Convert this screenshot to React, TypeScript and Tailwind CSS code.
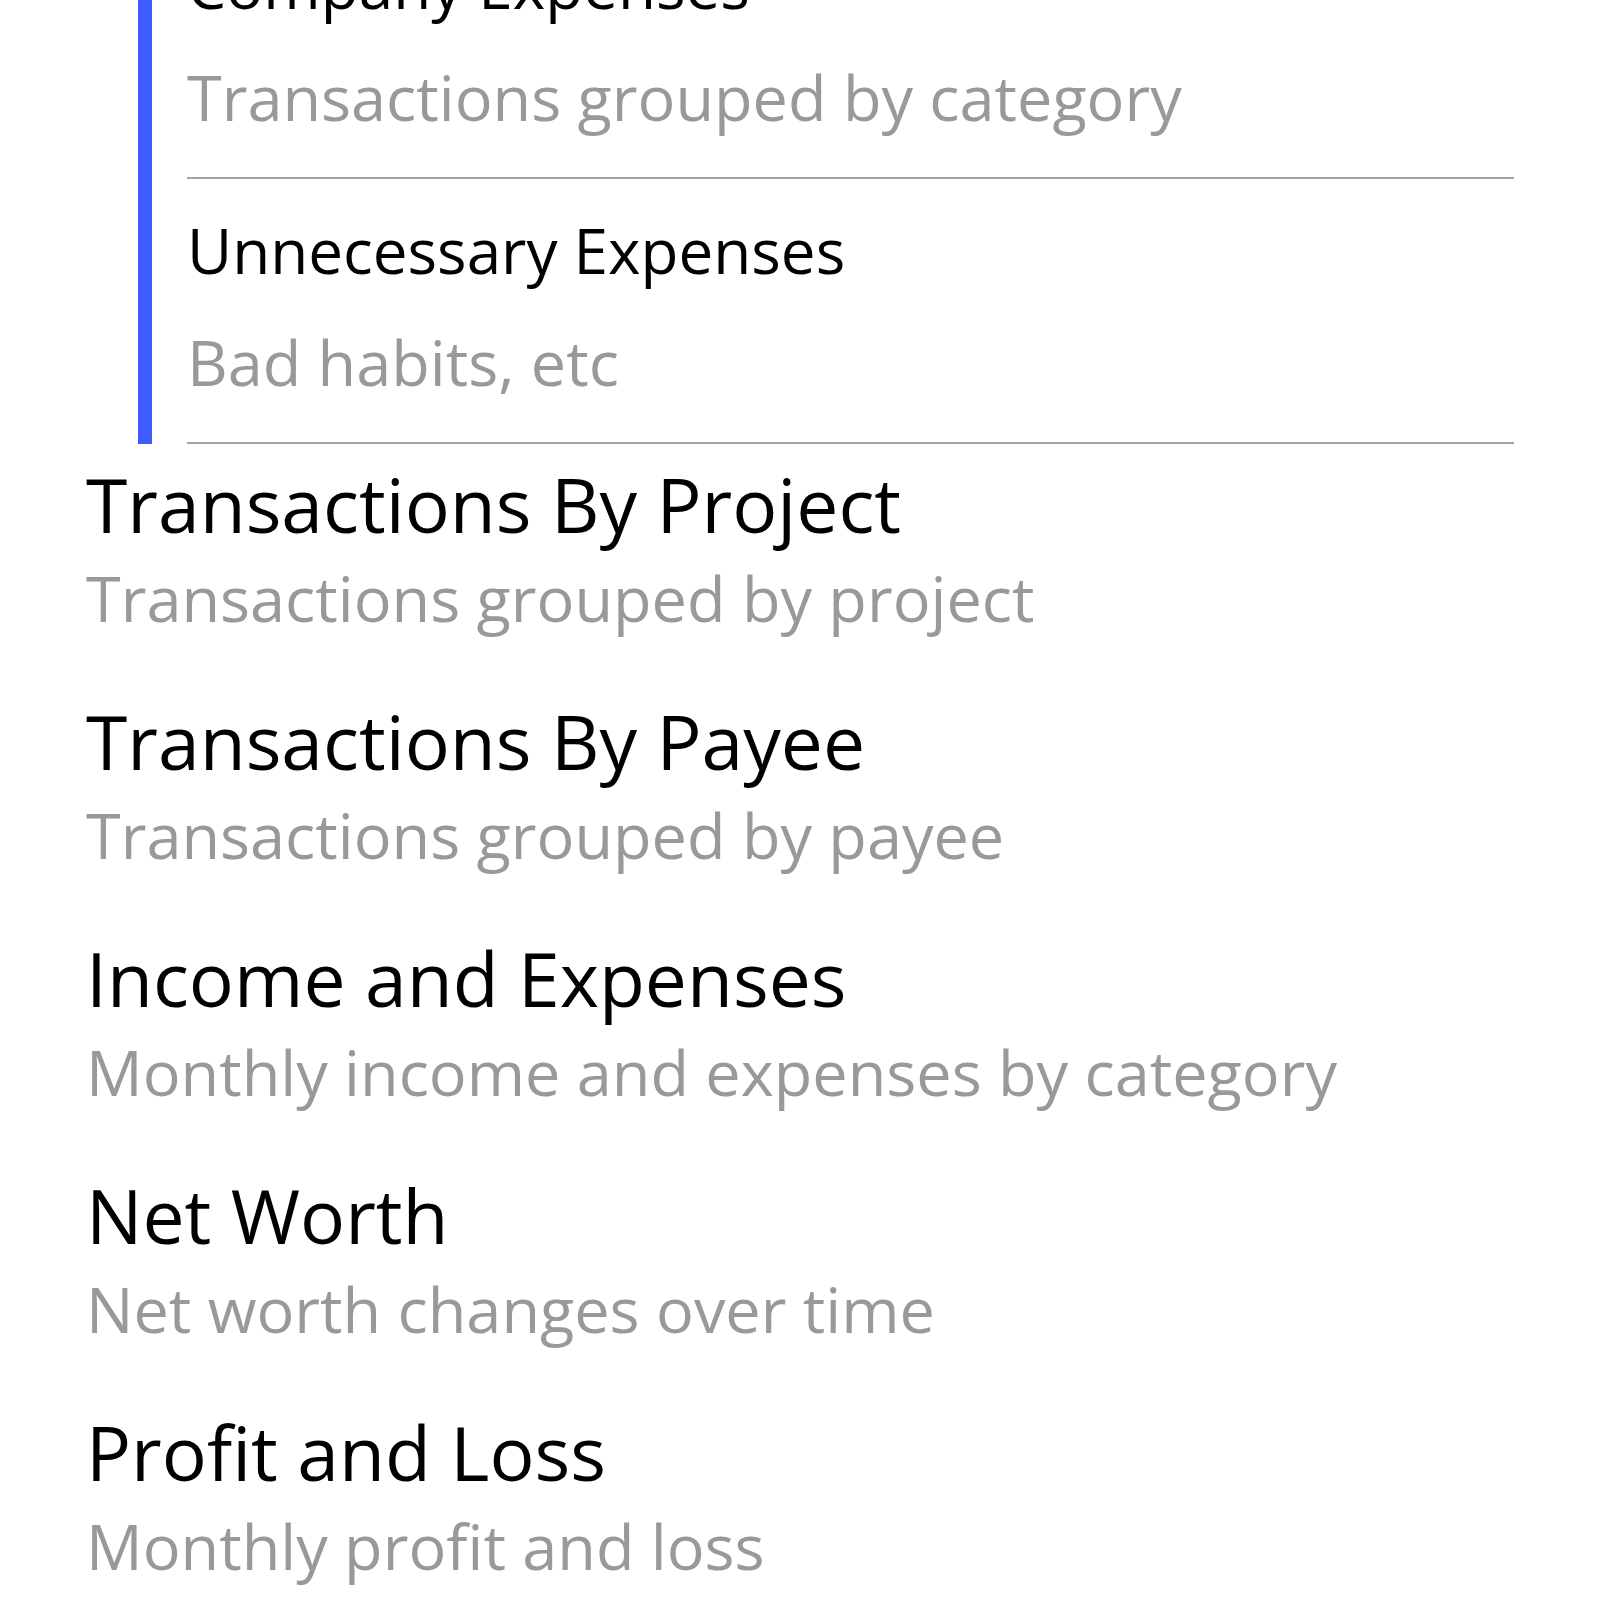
const SUB_ITEMS = [
  { title: 'Company Expenses', subtitle: 'Transactions grouped by category' },
  { title: 'Unnecessary Expenses', subtitle: 'Bad habits, etc' },
];

const REPORTS = [
  { title: 'Transactions By Project', subtitle: 'Transactions grouped by project' },
  { title: 'Transactions By Payee', subtitle: 'Transactions grouped by payee' },
  { title: 'Income and Expenses', subtitle: 'Monthly income and expenses by category' },
  { title: 'Net Worth', subtitle: 'Net worth changes over time' },
  { title: 'Profit and Loss', subtitle: 'Monthly profit and loss' },
];

export default function App() {
  return (
    <div className="w-[1600px] h-[1600px] overflow-hidden bg-white px-[86px] font-['Open_Sans','Noto_Sans',sans-serif] text-black">
      {/* expanded group, scrolled partly out of view */}
      <div className="-mt-[86px] flex">
        <div className="ml-[52px] w-[14px] bg-[#3d5bfe]" />
        <div className="ml-[35px] flex-1">
          {SUB_ITEMS.map((item) => (
            <div key={item.title} className="border-b-2 border-[#a3a3a3] pt-[11px] pb-[30px]">
              <div className="text-[62px] leading-[121px] whitespace-nowrap">{item.title}</div>
              <div className="text-[63px] leading-[101px] whitespace-nowrap text-[#999999]">
                {item.subtitle}
              </div>
            </div>
          ))}
        </div>
      </div>

      <div className="pt-[10px]">
        {REPORTS.map((r) => (
          <div key={r.title} className="pb-[49px]">
            <div className="text-[75px] leading-[100px] whitespace-nowrap">{r.title}</div>
            <div className="text-[63px] leading-[88px] whitespace-nowrap text-[#999999]">
              {r.subtitle}
            </div>
          </div>
        ))}
      </div>
    </div>
  );
}
